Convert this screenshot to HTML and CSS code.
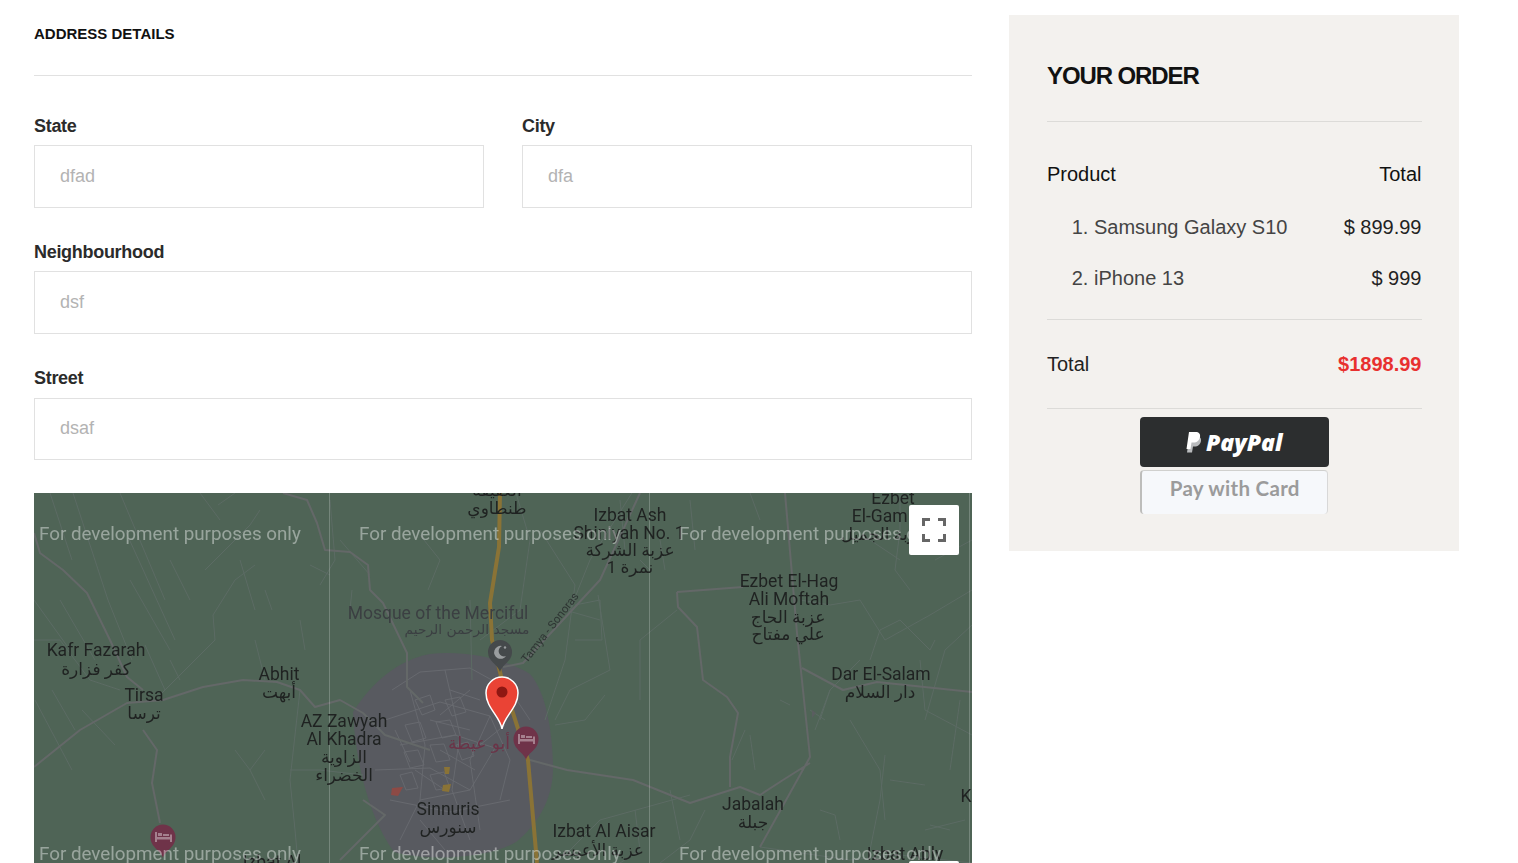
FILE: index.html
```html
<!DOCTYPE html>
<html lang="en">
<head>
  <meta charset="UTF-8">
  <title>Checkout</title>
  <link rel="stylesheet" href="styles.css">
</head>
<body>

  <div class="checkout">

    <form class="address-form">
      <h2 class="form-title">Address Details</h2>

      <div class="fields">
        <div class="field-row">
          <div class="field">
            <label>State</label>
            <input type="text" placeholder="dfad">
          </div>
          <div class="field">
            <label>City</label>
            <input type="text" placeholder="dfa">
          </div>
        </div>
        <div class="field">
          <label>Neighbourhood</label>
          <input type="text" placeholder="dsf">
        </div>
        <div class="field">
          <label>Street</label>
          <input type="text" placeholder="dsaf">
        </div>
      </div>

      <div class="map">
        <svg class="map-canvas" viewBox="34 493 938 370" width="938" height="370">
          <!-- town area -->
          <path class="town" d="M353 712C372 682 398 660 430 654C462 650 505 658 530 674C546 692 552 730 553 765C554 800 536 826 516 842C490 858 430 862 394 852C372 822 356 770 353 712Z"/>

          <!-- town streets -->
          <path class="street" d="M392 690L420 672L470 668L510 690L530 720M385 720L440 702L490 716L510 760L500 800M400 745L455 735L495 748L470 790L420 800M375 770L430 768L470 790M410 690L425 745L420 800L400 840M445 670L460 735L452 790L470 840M470 690L440 715M490 716L470 760L480 830M390 800L450 812L510 800M430 720L470 730M415 770L445 790M440 750L475 770M395 730L410 762M450 690L480 700M505 725L480 745M420 820L445 850M415 700L422 715L435 710L430 695ZM445 700L452 716L466 712L460 697ZM405 725L412 742L426 738L420 722ZM436 722L442 738L456 735L450 720ZM404 752L410 768L424 765L418 750ZM430 745L436 762L450 760L444 744ZM456 745L462 760L474 756L468 742ZM430 775L436 790L450 788L444 772ZM400 775L406 790L418 788L412 772Z"/>

          <!-- minor roads -->
          <path class="lane" d="M50 493L72 560M73 493L108 600L132 660M120 493L165 600M125 530L175 640M60 600L95 660M130 580L170 650M34 640L60 640L90 680L120 690M34 600L70 650M35 700L72 770M52 690L75 730M82 710L115 745M170 560L190 600M200 493L220 520M218 505L235 493M205 570L250 525L260 510M213 615L235 580L255 565M213 615L215 640L160 695M240 560L255 610M145 645L165 690M170 660L180 680M300 620L305 650M265 590L272 610M255 640L265 680M300 690L290 780L295 830L298 863M290 770L320 770L363 775M265 750L250 770L265 800M250 770L235 750M330 500L335 560L320 585M310 565L330 575M352 590L350 610M340 540L370 575M470 600L472 680M420 535L440 560M440 560L428 590M516 493L530 540L520 610L480 640M540 530L575 585L565 660L545 720M565 610L600 620M570 610L590 560L640 480M575 605L600 600L602 640L575 640M598 595L610 670L570 690L555 720M605 695L585 720L555 725M640 560L650 570M677 610L640 640L640 700M660 540L665 570M620 500L625 550M690 500L695 550M750 493L760 520M800 600L830 605L860 600L885 640L930 615L972 590M870 660L880 630L900 620L930 650L935 640M820 720L830 690L860 660M810 710L825 720M830 690L815 730M850 720L880 770L885 820M885 755L880 800L870 850M890 780L925 785M920 660L925 710L972 735M925 720L945 650L972 625M935 560L972 540M870 540L900 560M900 495L900 530L895 570L910 590M635 810L640 850L620 863M670 790L680 840M560 860L600 820L690 795M705 810L690 840L660 863M732 760L745 730M750 735L755 770M780 700L790 705M835 815L840 840M930 825L950 830M760 847L850 860L900 855L972 863M820 810L835 815M925 830L965 820M960 700L950 770"/>

          <!-- main roads -->
          <path class="road" d="M283 493L307 500L317 523L325 550L350 552L368 565L370 590L383 603L407 653L407 687L423 703M34 767L80 730L127 703L163 700L203 687L243 680L277 682L300 690L315 707L340 700L363 713L385 735L430 750M34 533L40 553L63 570L87 593L110 640L127 677L143 690M143 730L157 750L152 783L160 823M785 493L797 633L810 757L760 847M810 763L783 780L760 795L740 787L690 803L633 780L567 770L530 760M802 668L843 690L877 682L972 692M677 592L743 587M677 592L678 607L697 627L703 680L727 697L738 713L730 757L730 787M503 667L523 663L600 580L640 493M363 800L385 815L340 860"/>

          <!-- highway -->
          <path class="highway" d="M500 493L499 547L490 603L492 640L502 680L513 713L528 760L537 863"/>

          <!-- tile seams -->
          <path class="seam" d="M329.500 493V863M649.500 493V863M969.500 493V863"/>

          <!-- small building patches -->
          <path class="patch-red" d="M392 788L403 787L398 796L391 795Z"/>
          <path class="patch-gold" d="M444 767L450 767L449 774L445 774ZM443 785L451 784L449 792L442 791Z"/>
          <path class="patch-dark" d="M812 710L816 713L812 718Z"/>

          <!-- place labels -->
          <g class="labels">
            <text x="96" y="656">Kafr Fazarah</text>
            <text class="ar" x="96" y="675">كفر فزارة</text>
            <text x="144" y="701">Tirsa</text>
            <text class="ar" x="144" y="719">ترسا</text>
            <text x="279" y="680">Abhit</text>
            <text class="ar" x="279" y="698">أبهت</text>
            <text x="344" y="727">AZ Zawyah</text>
            <text x="344" y="745">Al Khadra</text>
            <text class="ar" x="344" y="763">الزاوية</text>
            <text class="ar" x="344" y="781">الخضراء</text>
            <text x="448" y="815">Sinnuris</text>
            <text class="ar" x="448" y="833">سنورس</text>
            <text x="630" y="521">Izbat Ash</text>
            <text x="629" y="539">Shiniyah No. 1</text>
            <text class="ar" x="630" y="556">عزبة الشركة</text>
            <text class="ar" x="630" y="573">نمرة 1</text>
            <text x="789" y="587">Ezbet El-Hag</text>
            <text x="789" y="605">Ali Moftah</text>
            <text class="ar" x="788" y="623">عزبة الحاج</text>
            <text class="ar" x="788" y="640">علي مفتاح</text>
            <text x="881" y="680">Dar El-Salam</text>
            <text class="ar" x="880" y="698">دار السلام</text>
            <text x="753" y="810">Jabalah</text>
            <text class="ar" x="753" y="828">جبلة</text>
            <text x="604" y="837">Izbat Al Aisar</text>
            <text class="ar" x="598" y="856">عزبة الأعيسر</text>
            <text x="893" y="504">Ezbet</text>
            <text x="884" y="522">El-Gamil</text>
            <text class="ar" x="884" y="540">عزبة الجميل</text>
            <text class="ar" x="497" y="496">العفيفة</text>
            <text class="ar" x="497" y="514">طنطاوي</text>
            <text x="966" y="802">K</text>
            <text x="905" y="860">Izbat Ably</text>
            <text x="272" y="868">Izbat Al</text>
          </g>
          <text class="label-poi" x="438" y="619">Mosque of the Merciful</text>
          <text class="label-poi-ar" x="467" y="634">مسجد الرحمن الرحيم</text>
          <text class="label-road" transform="translate(553 630) rotate(-52)">Tamya - Sonoras</text>
          <text class="label-hotel" x="479" y="749">أبو عيطة</text>

          <!-- mosque pin -->
          <path class="pin-mosque" d="M500 672C498 664 488 662 488 652A12 12 0 0 1 512 652C512 662 502 664 500 672Z"/>
          <path class="pin-glyph-grey" d="M502 646A6.500 6.500 0 1 0 506 656A5.200 5.200 0 1 1 502 646Z"/>
          <circle class="pin-glyph-grey" cx="505" cy="647.500" r="1.200"/>

          <!-- hotel pins -->
          <g id="hotel-pin">
            <path class="pin-hotel" d="M526 760C524 752 513.500 750 513.500 739A12.500 12.500 0 0 1 538.500 739C538.500 750 528 752 526 760Z"/>
            <path class="pin-glyph-hotel" d="M518 734H520V739H533V736.500H535V744H533V741.500H520V744H518ZM521 735H525V738H521ZM526 736H532V738H526Z"/>
          </g>
          <use href="#hotel-pin" x="-363" y="98"/>

          <!-- selected marker -->
          <path class="marker" d="M502 729C500 716 486 708 486 693A16 16 0 0 1 518 693C518 708 504 716 502 729Z"/>
          <circle class="marker-dot" cx="502" cy="692" r="5.500"/>

          <!-- watermark -->
          <g class="watermark">
            <text x="39" y="540">For development purposes only</text>
            <text x="359" y="540">For development purposes only</text>
            <text x="679" y="540">For development purposes only</text>
            <text x="39" y="860">For development purposes only</text>
            <text x="359" y="860">For development purposes only</text>
            <text x="679" y="860">For development purposes only</text>
          </g>
        </svg>

        <button type="button" class="map-fullscreen" aria-label="Toggle fullscreen">
          <svg viewBox="0 0 24 24" width="24" height="24">
            <path d="M1.500 8V1.500H8M16 1.500H22.500V8M22.500 16V22.500H16M8 22.500H1.500V16"/>
          </svg>
        </button>
        <div class="map-zoom"></div>
      </div>
    </form>

    <aside class="order">
      <h3 class="order-title">Your Order</h3>

      <div class="order-row order-head">
        <span>Product</span>
        <span>Total</span>
      </div>
      <ol class="order-items">
        <li><div class="order-row"><span class="item-name">Samsung Galaxy S10</span><span>$ 899.99</span></div></li>
        <li><div class="order-row"><span class="item-name">iPhone 13</span><span>$ 999</span></div></li>
      </ol>
      <div class="order-row order-total">
        <span>Total</span>
        <span class="total-price">$1898.99</span>
      </div>

      <div class="payment">
        <button type="button" class="btn-paypal">
          <svg viewBox="0 0 17 21" width="17" height="21">
            <path class="pp-back" d="M3.500 4H10C13.500 4 15.500 6 15 9C14.400 12.500 12 14.500 8.500 14.500H7L6 20.500H1Z"/>
            <path class="pp-front" d="M3 0H9.500C13 0 14.500 2 14 5C13.400 8.500 11 10.500 7.500 10.500H5.500L4.500 17H0.500Z"/>
          </svg>
          <span>PayPal</span>
        </button>
        <button type="button" class="btn-card">Pay with Card</button>
      </div>
    </aside>

  </div>

</body>
</html>
```

FILE: styles.css
```css
html, body {
  margin: 0;
  height: 863px;
  overflow: hidden;
  background-color: #fff;
}

body {
  font-family: "Liberation Sans", Arial, sans-serif;
  color: #111;
}

.checkout {
  display: flex;
  align-items: flex-start;
  gap: 37px;
  padding-left: 34px;
}

/* address form */
.address-form {
  width: 938px;
  flex-shrink: 0;
}

.form-title {
  margin: 0 0 39.6px;
  padding: 24px 0 31px;
  border-bottom: 1px solid #e1e1e1;
  font-size: 15px;
  line-height: 20px;
  font-weight: bold;
  text-transform: uppercase;
  color: #111;
}

.fields {
  display: flex;
  flex-direction: column;
  gap: 34.3px;
  margin-bottom: 32.8px;
}

.field-row {
  display: grid;
  grid-template-columns: 450px 450px;
  gap: 38px;
}

.field label {
  display: block;
  margin-bottom: 9.4px;
  font-size: 18px;
  line-height: 20px;
  font-weight: bold;
  letter-spacing: -0.3px;
  color: #2b2b2b;
}

.field input {
  display: block;
  box-sizing: border-box;
  width: 100%;
  height: 62.6px;
  padding: 0 25px;
  border: 1px solid #e1e1e1;
  outline: none;
  background: #fff;
  font-family: inherit;
  font-size: 18px;
}

.field input::placeholder {
  color: #b3b3b3;
  opacity: 1;
}

/* map */
.map {
  position: relative;
  height: 370px;
  overflow: hidden;
  background-color: #4f6456;
}

.map-canvas {
  display: block;
  filter: blur(0.35px);
}

.town { fill: #585a60; }
.street { fill: none; stroke: #696b70; stroke-width: 0.9; }
.lane { fill: none; stroke: #5c6b64; stroke-width: 1; }
.road { fill: none; stroke: #646868; stroke-width: 2; stroke-linejoin: round; }
.highway { fill: none; stroke: #8a7336; stroke-width: 4; stroke-linejoin: round; }
.seam { fill: none; stroke: #fff; stroke-opacity: 0.22; stroke-width: 1; }
.patch-red { fill: #8d4a45; }
.patch-gold { fill: #8a7336; }
.patch-dark { fill: #5a5e60; }

.labels text {
  font-family: Roboto, "DejaVu Sans", sans-serif;
  font-size: 17.5px;
  fill: #1f2221;
  text-anchor: middle;
}

.labels text.ar {
  font-size: 17px;
}

.label-poi {
  font-family: Roboto, sans-serif;
  font-size: 17.5px;
  fill: #3b3f42;
  text-anchor: middle;
}

.label-poi-ar {
  font-family: "DejaVu Sans", sans-serif;
  font-size: 13.8px;
  fill: #3b3f42;
  text-anchor: middle;
}

.label-road {
  font-family: Roboto, sans-serif;
  font-size: 11.5px;
  fill: #2e3533;
  text-anchor: middle;
}

.label-hotel {
  font-family: "DejaVu Sans", sans-serif;
  font-size: 17px;
  fill: #6b3347;
  text-anchor: middle;
}

.pin-mosque { fill: #45494b; }
.pin-glyph-grey { fill: #9a9d9f; }
.pin-hotel { fill: #6f3349; }
.pin-glyph-hotel { fill: #a5808e; }
.marker { fill: #ea4335; stroke: #fff; stroke-width: 1.5; }
.marker-dot { fill: #8f1712; }

.watermark text {
  font-family: Roboto, sans-serif;
  font-size: 18.8px;
  fill: #fff;
  fill-opacity: 0.42;
}

.map-fullscreen {
  position: absolute;
  top: 12px;
  right: 13px;
  display: flex;
  align-items: center;
  justify-content: center;
  width: 50px;
  height: 50px;
  padding: 0;
  border: none;
  border-radius: 2px;
  background: #fff;
}

.map-fullscreen path {
  fill: none;
  stroke: #666;
  stroke-width: 3;
}

.map-zoom {
  position: absolute;
  top: 368px;
  right: 13px;
  width: 50px;
  height: 60px;
  border-radius: 2px;
  background: #fff;
}

/* order summary */
.order {
  box-sizing: border-box;
  width: 450px;
  flex-shrink: 0;
  margin-top: 15px;
  padding: 47px 37.5px 37px 38px;
  background-color: #f3f1ee;
}

.order-title {
  margin: 0 0 40px;
  padding-bottom: 31px;
  border-bottom: 1px solid #dcdbd8;
  font-size: 24px;
  line-height: 28px;
  font-weight: bold;
  letter-spacing: -1.1px;
  text-transform: uppercase;
  color: #111;
}

.order-row {
  display: flex;
  justify-content: space-between;
  font-size: 20px;
  line-height: 24px;
  color: #222;
}

.order-head {
  color: #111;
}

.order-items {
  margin: 29px 0;
  padding: 0 0 29px 47px;
  border-bottom: 1px solid #dcdbd8;
  color: #444;
  font-size: 20px;
  line-height: 24px;
}

.order-items li + li {
  margin-top: 27px;
}

.item-name {
  color: #444;
}

.order-total {
  margin-top: 32px;
  padding-bottom: 32px;
  border-bottom: 1px solid #dcdbd8;
}

.total-price {
  font-weight: bold;
  color: #e8302f;
}

/* payment buttons */
.payment {
  display: flex;
  flex-direction: column;
  align-items: center;
  gap: 3px;
  margin-top: 8px;
}

.btn-paypal {
  display: flex;
  align-items: center;
  justify-content: center;
  gap: 3px;
  box-sizing: border-box;
  width: 189px;
  height: 50px;
  padding: 0;
  border: none;
  border-radius: 4px;
  background-color: #2c2e2f;
  color: #fff;
  font-family: "Open Sans", sans-serif;
  font-size: 23px;
  font-weight: 800;
  font-style: italic;
}

.pp-back { fill: #b9bbbd; }
.pp-front { fill: #fff; }

.btn-card {
  box-sizing: border-box;
  width: 188px;
  height: 44px;
  padding: 0 0 9px;
  border: none;
  border-top: 1px solid #d0d0ce;
  border-left: 2px solid #bdbdbb;
  border-right: 1px solid #d8d8d8;
  border-radius: 4px;
  background-color: #f6f8fb;
  color: #9b9b9b;
  font-family: Lato, sans-serif;
  font-size: 20.5px;
  font-weight: 700;
  letter-spacing: 0.3px;
}
```
